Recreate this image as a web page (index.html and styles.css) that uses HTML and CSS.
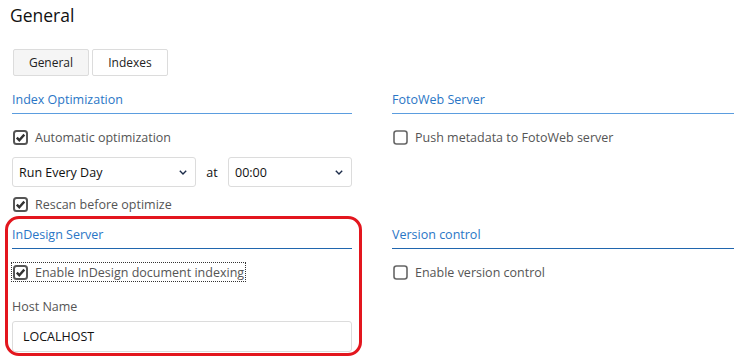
FILE: index.html
```html
<html>
    <head>
        <meta http-equiv="Content-Type" content="text/html; charset=utf-8" />
        <title>General</title>
        <link rel="stylesheet" href="styles.css">
    </head>
    <body>
        <div class="page">
            <h1 class="title">General</h1>

            <div class="tabs">
                <button class="tab active">General</button>
                <button class="tab">Indexes</button>
            </div>

            <div class="grid">
                <div class="section">
                    <div class="section-head light">Index Optimization</div>
                    <label class="check first">
                        <svg class="box" width="15" height="15" viewBox="0 0 15 15"><rect x="1" y="1" width="13" height="13" rx="2.5" fill="#fff" stroke="#555" stroke-width="2"/><path d="M3.8 7.6 L6.3 10.2 L11.3 4.6" fill="none" stroke="#333" stroke-width="2.4"/></svg>
                        <span>Automatic optimization</span>
                    </label>
                    <div class="schedule">
                        <div class="select wide">
                            <span>Run Every Day</span>
                            <svg width="8" height="5" viewBox="0 0 8 5"><path d="M0.8 0.8 L4 4 L7.2 0.8" fill="none" stroke="#1c2c4a" stroke-width="1.4"/></svg>
                        </div>
                        <span class="at">at</span>
                        <div class="select narrow">
                            <span>00:00</span>
                            <svg width="8" height="5" viewBox="0 0 8 5"><path d="M0.8 0.8 L4 4 L7.2 0.8" fill="none" stroke="#1c2c4a" stroke-width="1.4"/></svg>
                        </div>
                    </div>
                    <label class="check rescan">
                        <svg class="box" width="15" height="15" viewBox="0 0 15 15"><rect x="1" y="1" width="13" height="13" rx="2.5" fill="#fff" stroke="#555" stroke-width="2"/><path d="M3.8 7.6 L6.3 10.2 L11.3 4.6" fill="none" stroke="#333" stroke-width="2.4"/></svg>
                        <span>Rescan before optimize</span>
                    </label>
                </div>

                <div class="section">
                    <div class="section-head light">FotoWeb Server</div>
                    <label class="check first">
                        <svg class="box" width="15" height="15" viewBox="0 0 15 15"><rect x="1" y="1" width="13" height="13" rx="2.5" fill="#fff" stroke="#666" stroke-width="1.6"/></svg>
                        <span>Push metadata to FotoWeb server</span>
                    </label>
                </div>

                <div class="section lower">
                    <div class="section-head">InDesign Server</div>
                    <div class="focus-row">
                        <label class="check focused">
                            <svg class="box" width="15" height="15" viewBox="0 0 15 15"><rect x="1" y="1" width="13" height="13" rx="2.5" fill="#fff" stroke="#555" stroke-width="2"/><path d="M3.8 7.6 L6.3 10.2 L11.3 4.6" fill="none" stroke="#333" stroke-width="2.4"/></svg>
                            <span>Enable InDesign document indexing</span>
                        </label>
                    </div>
                    <div class="field-label">Host Name</div>
                    <div class="text-input">LOCALHOST</div>
                </div>

                <div class="section lower">
                    <div class="section-head">Version control</div>
                    <label class="check first">
                        <svg class="box" width="15" height="15" viewBox="0 0 15 15"><rect x="1" y="1" width="13" height="13" rx="2.5" fill="#fff" stroke="#666" stroke-width="1.6"/></svg>
                        <span>Enable version control</span>
                    </label>
                </div>
            </div>

            <div class="highlight"></div>
        </div>
    </body>
</html>
```

FILE: styles.css
```css
body {
    margin: 0;
    background: #fff;
    font-family: "Open Sans", "Noto Sans", sans-serif;
    color: #555;
}

.page {
    position: relative;
    width: 734px;
    height: 360px;
    overflow: hidden;
}

.title {
    margin: 0;
    padding-left: 10px;
    height: 30px;
    line-height: 30px;
    font-size: 17.5px;
    font-weight: normal;
    color: #111;
}

.tabs {
    display: flex;
    gap: 3px;
    margin-top: 19px;
    padding-left: 13px;
}

.tab {
    height: 27px;
    width: 76px;
    padding: 0;
    border: 1px solid #dcdcdc;
    border-radius: 2px;
    background: #fff;
    font-family: inherit;
    font-size: 12px;
    color: #222;
}

.tab.active {
    background: #f5f5f5;
}

.grid {
    display: grid;
    grid-template-columns: 340px 342px;
    column-gap: 40px;
    margin-top: 14px;
    padding-left: 12px;
}

.section-head {
    height: 20px;
    line-height: 20px;
    padding-bottom: 3px;
    border-bottom: 1px solid #2066ae;
    font-size: 12.5px;
    color: #2a76c6;
}

.section-head.light {
    border-bottom-color: #5b9ddf;
}

.section.lower {
    margin-top: 11px;
}

.check {
    display: flex;
    align-items: center;
    gap: 7px;
    height: 20px;
    font-size: 12.5px;
    white-space: nowrap;
    color: #555;
}

.check .box {
    margin-left: 1px;
    flex-shrink: 0;
}

.check.first {
    margin-top: 13px;
}

.check.rescan {
    margin-top: 7px;
}

.focus-row {
    display: flex;
    margin-top: 14px;
}

.check.focused {
    height: 18px;
    padding-right: 1px;
    outline: 1px dotted #333;
}

.schedule {
    display: flex;
    align-items: center;
    margin-top: 10px;
}

.select {
    display: flex;
    align-items: center;
    justify-content: space-between;
    box-sizing: border-box;
    height: 30px;
    padding: 0 8px 0 6px;
    border: 1px solid #dcdcdc;
    border-radius: 3px;
    font-size: 12.5px;
    color: #111;
}

.select.wide {
    width: 184px;
}

.select.narrow {
    width: 124px;
}

.at {
    width: 32px;
    text-align: center;
    font-size: 12.5px;
    color: #111;
}

.field-label {
    margin-top: 16px;
    height: 20px;
    line-height: 20px;
    font-size: 12.5px;
    color: #555;
}

.text-input {
    box-sizing: border-box;
    margin-top: 4px;
    width: 340px;
    height: 31px;
    line-height: 29px;
    padding-left: 10px;
    border: 1px solid #dcdcdc;
    border-radius: 3px;
    font-size: 12.5px;
    color: #111;
}

/* red annotation drawn over the InDesign block */
.highlight {
    position: absolute;
    left: 5px;
    top: 216px;
    width: 351px;
    height: 134px;
    border: 3px solid #e3161e;
    border-radius: 14px;
    pointer-events: none;
}
```
